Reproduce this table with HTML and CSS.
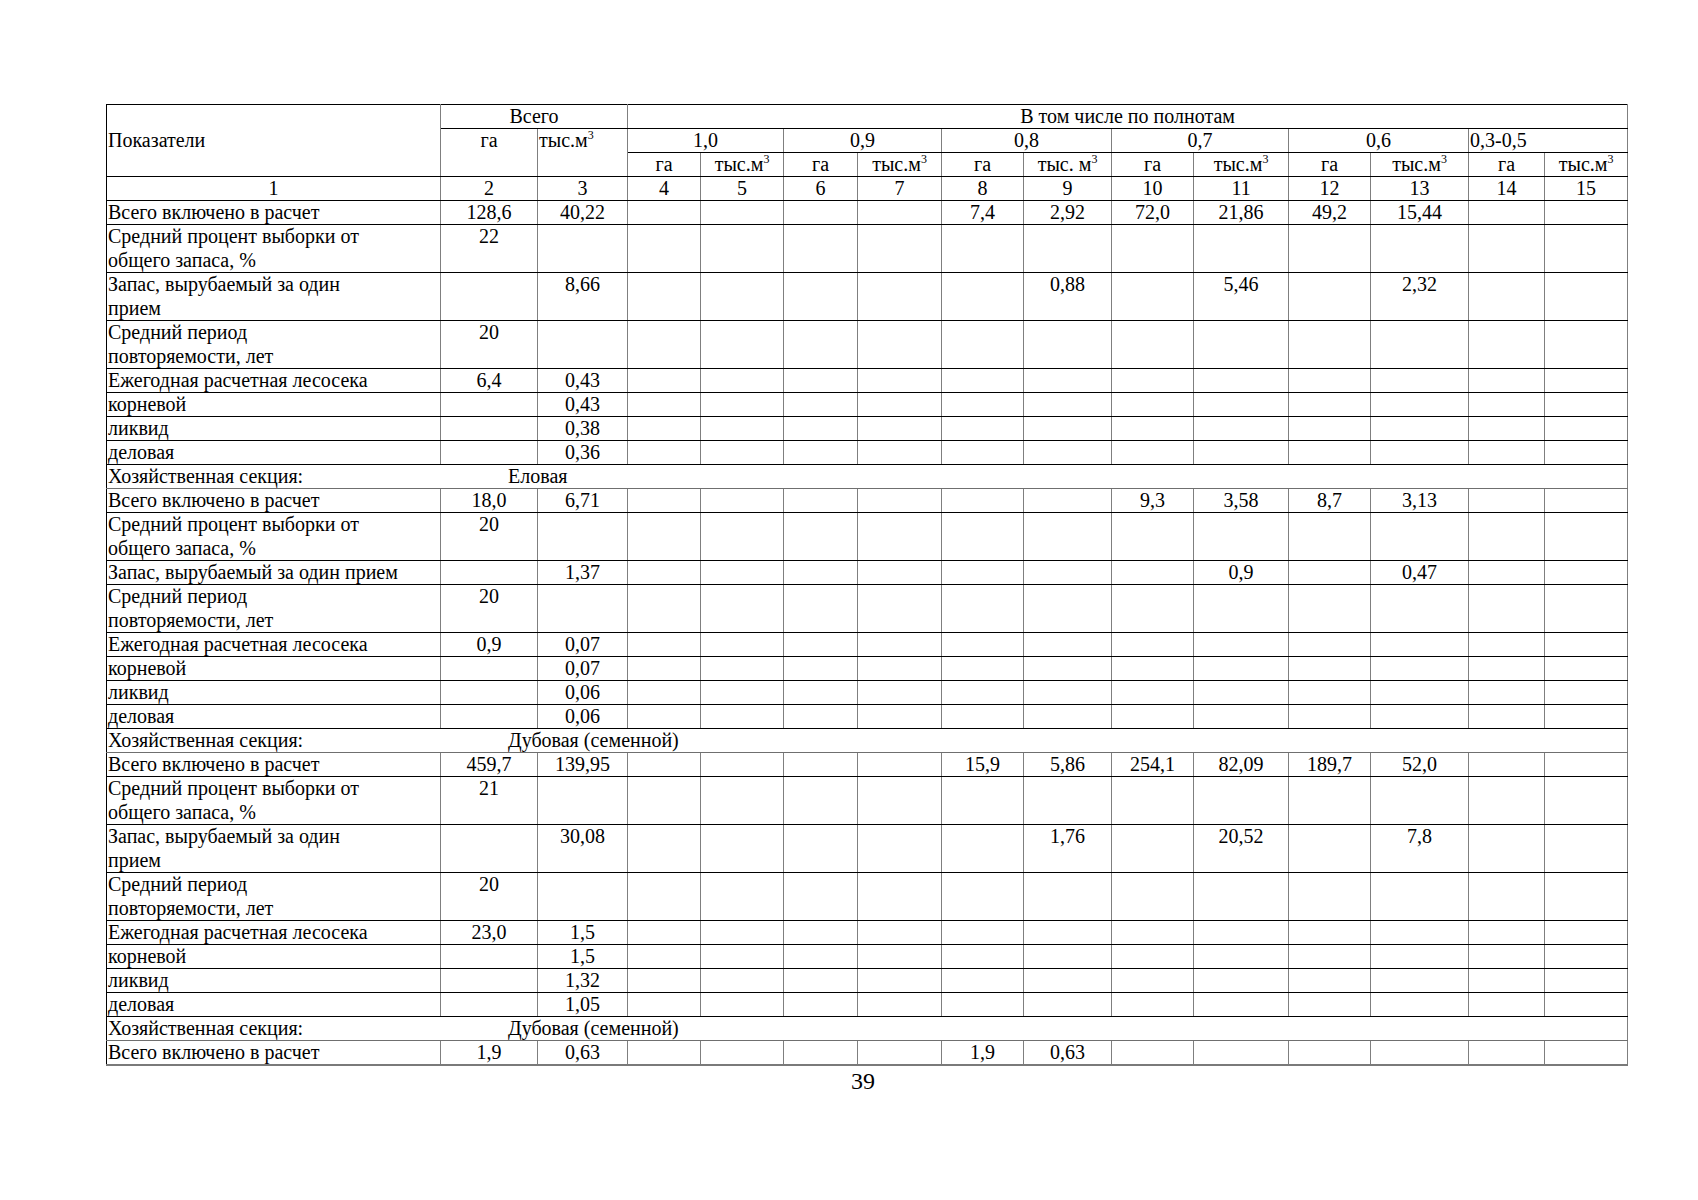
FILE: index.html
```html
<!DOCTYPE html>
<html lang="ru">
<head>
<meta charset="utf-8">
<title>Таблица 39</title>
<link rel="stylesheet" href="styles.css">
</head>
<body>
<div class="page">
<table class="tbl">
<colgroup>
<col style="width:334px"><col style="width:97px"><col style="width:90px"><col style="width:73px"><col style="width:83px"><col style="width:74px"><col style="width:84px"><col style="width:82px"><col style="width:88px"><col style="width:82px"><col style="width:95px"><col style="width:82px"><col style="width:98px"><col style="width:76px"><col style="width:83px">
</colgroup>
<tr>
<td rowspan="3" class="l mid"><div>Показатели</div></td>
<td colspan="2" class="c"><div>Всего</div></td>
<td colspan="12" class="c"><div>В том числе по полнотам</div></td>
</tr>
<tr>
<td rowspan="2" class="c"><div>га</div></td>
<td rowspan="2" class="l"><div>тыс.м<sup>3</sup></div></td>
<td colspan="2" class="c"><div>1,0</div></td>
<td colspan="2" class="c"><div>0,9</div></td>
<td colspan="2" class="c"><div>0,8</div></td>
<td colspan="2" class="c"><div>0,7</div></td>
<td colspan="2" class="c"><div>0,6</div></td>
<td colspan="2" class="l"><div>0,3-0,5</div></td>
</tr>
<tr>
<td class="c"><div>га</div></td><td class="c"><div>тыс.м<sup>3</sup></div></td>
<td class="c"><div>га</div></td><td class="c"><div>тыс.м<sup>3</sup></div></td>
<td class="c"><div>га</div></td><td class="c"><div>тыс. м<sup>3</sup></div></td>
<td class="c"><div>га</div></td><td class="c"><div>тыс.м<sup>3</sup></div></td>
<td class="c"><div>га</div></td><td class="c"><div>тыс.м<sup>3</sup></div></td>
<td class="c"><div>га</div></td><td class="c"><div>тыс.м<sup>3</sup></div></td>
</tr>
<tr class="num">
<td class="c"><div>1</div></td><td class="c"><div>2</div></td><td class="c"><div>3</div></td><td class="c"><div>4</div></td><td class="c"><div>5</div></td><td class="c"><div>6</div></td><td class="c"><div>7</div></td><td class="c"><div>8</div></td><td class="c"><div>9</div></td><td class="c"><div>10</div></td><td class="c"><div>11</div></td><td class="c"><div>12</div></td><td class="c"><div>13</div></td><td class="c"><div>14</div></td><td class="c"><div>15</div></td>
</tr>

<tr>
<td class="l"><div>Всего включено в расчет</div></td><td class="c"><div>128,6</div></td><td class="c"><div>40,22</div></td><td></td><td></td><td></td><td></td><td class="c"><div>7,4</div></td><td class="c"><div>2,92</div></td><td class="c"><div>72,0</div></td><td class="c"><div>21,86</div></td><td class="c"><div>49,2</div></td><td class="c"><div>15,44</div></td><td></td><td></td>
</tr>
<tr class="dbl">
<td class="l"><div>Средний процент выборки от<br>общего запаса, %</div></td><td class="c"><div>22</div></td><td></td><td></td><td></td><td></td><td></td><td></td><td></td><td></td><td></td><td></td><td></td><td></td><td></td>
</tr>
<tr class="dbl">
<td class="l"><div>Запас, вырубаемый за один<br>прием</div></td><td></td><td class="c"><div>8,66</div></td><td></td><td></td><td></td><td></td><td></td><td class="c"><div>0,88</div></td><td></td><td class="c"><div>5,46</div></td><td></td><td class="c"><div>2,32</div></td><td></td><td></td>
</tr>
<tr class="dbl">
<td class="l"><div>Средний период<br>повторяемости, лет</div></td><td class="c"><div>20</div></td><td></td><td></td><td></td><td></td><td></td><td></td><td></td><td></td><td></td><td></td><td></td><td></td><td></td>
</tr>
<tr>
<td class="l"><div>Ежегодная расчетная лесосека</div></td><td class="c"><div>6,4</div></td><td class="c"><div>0,43</div></td><td></td><td></td><td></td><td></td><td></td><td></td><td></td><td></td><td></td><td></td><td></td><td></td>
</tr>
<tr>
<td class="l"><div>корневой</div></td><td></td><td class="c"><div>0,43</div></td><td></td><td></td><td></td><td></td><td></td><td></td><td></td><td></td><td></td><td></td><td></td><td></td>
</tr>
<tr>
<td class="l"><div>ликвид</div></td><td></td><td class="c"><div>0,38</div></td><td></td><td></td><td></td><td></td><td></td><td></td><td></td><td></td><td></td><td></td><td></td><td></td>
</tr>
<tr>
<td class="l"><div>деловая</div></td><td></td><td class="c"><div>0,36</div></td><td></td><td></td><td></td><td></td><td></td><td></td><td></td><td></td><td></td><td></td><td></td><td></td>
</tr>

<tr class="sec">
<td colspan="15" class="l"><div class="secline"><span class="seclabel">Хозяйственная секция:</span><span>Еловая</span></div></td>
</tr>
<tr>
<td class="l"><div>Всего включено в расчет</div></td><td class="c"><div>18,0</div></td><td class="c"><div>6,71</div></td><td></td><td></td><td></td><td></td><td></td><td></td><td class="c"><div>9,3</div></td><td class="c"><div>3,58</div></td><td class="c"><div>8,7</div></td><td class="c"><div>3,13</div></td><td></td><td></td>
</tr>
<tr class="dbl">
<td class="l"><div>Средний процент выборки от<br>общего запаса, %</div></td><td class="c"><div>20</div></td><td></td><td></td><td></td><td></td><td></td><td></td><td></td><td></td><td></td><td></td><td></td><td></td><td></td>
</tr>
<tr>
<td class="l"><div>Запас, вырубаемый за один прием</div></td><td></td><td class="c"><div>1,37</div></td><td></td><td></td><td></td><td></td><td></td><td></td><td></td><td class="c"><div>0,9</div></td><td></td><td class="c"><div>0,47</div></td><td></td><td></td>
</tr>
<tr class="dbl">
<td class="l"><div>Средний период<br>повторяемости, лет</div></td><td class="c"><div>20</div></td><td></td><td></td><td></td><td></td><td></td><td></td><td></td><td></td><td></td><td></td><td></td><td></td><td></td>
</tr>
<tr>
<td class="l"><div>Ежегодная расчетная лесосека</div></td><td class="c"><div>0,9</div></td><td class="c"><div>0,07</div></td><td></td><td></td><td></td><td></td><td></td><td></td><td></td><td></td><td></td><td></td><td></td><td></td>
</tr>
<tr>
<td class="l"><div>корневой</div></td><td></td><td class="c"><div>0,07</div></td><td></td><td></td><td></td><td></td><td></td><td></td><td></td><td></td><td></td><td></td><td></td><td></td>
</tr>
<tr>
<td class="l"><div>ликвид</div></td><td></td><td class="c"><div>0,06</div></td><td></td><td></td><td></td><td></td><td></td><td></td><td></td><td></td><td></td><td></td><td></td><td></td>
</tr>
<tr>
<td class="l"><div>деловая</div></td><td></td><td class="c"><div>0,06</div></td><td></td><td></td><td></td><td></td><td></td><td></td><td></td><td></td><td></td><td></td><td></td><td></td>
</tr>

<tr class="sec">
<td colspan="15" class="l"><div class="secline"><span class="seclabel">Хозяйственная секция:</span><span>Дубовая (семенной)</span></div></td>
</tr>
<tr>
<td class="l"><div>Всего включено в расчет</div></td><td class="c"><div>459,7</div></td><td class="c"><div>139,95</div></td><td></td><td></td><td></td><td></td><td class="c"><div>15,9</div></td><td class="c"><div>5,86</div></td><td class="c"><div>254,1</div></td><td class="c"><div>82,09</div></td><td class="c"><div>189,7</div></td><td class="c"><div>52,0</div></td><td></td><td></td>
</tr>
<tr class="dbl">
<td class="l"><div>Средний процент выборки от<br>общего запаса, %</div></td><td class="c"><div>21</div></td><td></td><td></td><td></td><td></td><td></td><td></td><td></td><td></td><td></td><td></td><td></td><td></td><td></td>
</tr>
<tr class="dbl">
<td class="l"><div>Запас, вырубаемый за один<br>прием</div></td><td></td><td class="c"><div>30,08</div></td><td></td><td></td><td></td><td></td><td></td><td class="c"><div>1,76</div></td><td></td><td class="c"><div>20,52</div></td><td></td><td class="c"><div>7,8</div></td><td></td><td></td>
</tr>
<tr class="dbl">
<td class="l"><div>Средний период<br>повторяемости, лет</div></td><td class="c"><div>20</div></td><td></td><td></td><td></td><td></td><td></td><td></td><td></td><td></td><td></td><td></td><td></td><td></td><td></td>
</tr>
<tr>
<td class="l"><div>Ежегодная расчетная лесосека</div></td><td class="c"><div>23,0</div></td><td class="c"><div>1,5</div></td><td></td><td></td><td></td><td></td><td></td><td></td><td></td><td></td><td></td><td></td><td></td><td></td>
</tr>
<tr>
<td class="l"><div>корневой</div></td><td></td><td class="c"><div>1,5</div></td><td></td><td></td><td></td><td></td><td></td><td></td><td></td><td></td><td></td><td></td><td></td><td></td>
</tr>
<tr>
<td class="l"><div>ликвид</div></td><td></td><td class="c"><div>1,32</div></td><td></td><td></td><td></td><td></td><td></td><td></td><td></td><td></td><td></td><td></td><td></td><td></td>
</tr>
<tr>
<td class="l"><div>деловая</div></td><td></td><td class="c"><div>1,05</div></td><td></td><td></td><td></td><td></td><td></td><td></td><td></td><td></td><td></td><td></td><td></td><td></td>
</tr>

<tr class="sec">
<td colspan="15" class="l"><div class="secline"><span class="seclabel">Хозяйственная секция:</span><span>Дубовая (семенной)</span></div></td>
</tr>
<tr class="last">
<td class="l"><div>Всего включено в расчет</div></td><td class="c"><div>1,9</div></td><td class="c"><div>0,63</div></td><td></td><td></td><td></td><td></td><td class="c"><div>1,9</div></td><td class="c"><div>0,63</div></td><td></td><td></td><td></td><td></td><td></td><td></td>
</tr>
</table>
<div class="pagenum">39</div>
</div>
</body>
</html>
```

FILE: styles.css
```css
html, body {
  margin: 0;
  padding: 0;
  background: #ffffff;
}

.page {
  padding: 104px 0 0 106px;
  width: 1522px;
  font-family: "Liberation Serif", "Times New Roman", serif;
  color: #000;
}

.tbl {
  border-collapse: collapse;
  table-layout: fixed;
  width: 1522px;
  font-size: 20px;
  line-height: 24px;
  border: 1px solid #000;
}

.tbl tr {
  height: 23px;
}

.tbl tr.dbl {
  height: 47px;
}

.tbl td {
  padding: 0 1px;
  vertical-align: top;
  border-top: 1px solid #000;
  border-bottom: 1px solid #000;
  border-left: 1px solid #7f7f7f;
  border-right: 1px solid #7f7f7f;
  white-space: nowrap;
  overflow: visible;
}

.tbl td:first-child {
  border-left: 1px solid #000;
}

.tbl td > div {
  margin-top: -1px;
  margin-bottom: 0;
}

.tbl td.mid {
  vertical-align: middle;
}

.tbl td.c {
  text-align: center;
}

.tbl td.l {
  text-align: left;
}

.tbl sup {
  font-size: 12px;
  line-height: 0;
  vertical-align: 8px;
}

.tbl tr.sec td {
  border-top: 1px solid #6f6f6f;
  border-bottom: 1px solid #6f6f6f;
}

.tbl tr.last td {
  border-bottom: 2px solid #7a7a7a;
}

.secline {
  display: flex;
}

.seclabel {
  width: 400px;
  flex: none;
}

.pagenum {
  width: 1514px;
  margin-top: 3px;
  text-align: center;
  font-size: 24px;
  line-height: 24px;
}
```
